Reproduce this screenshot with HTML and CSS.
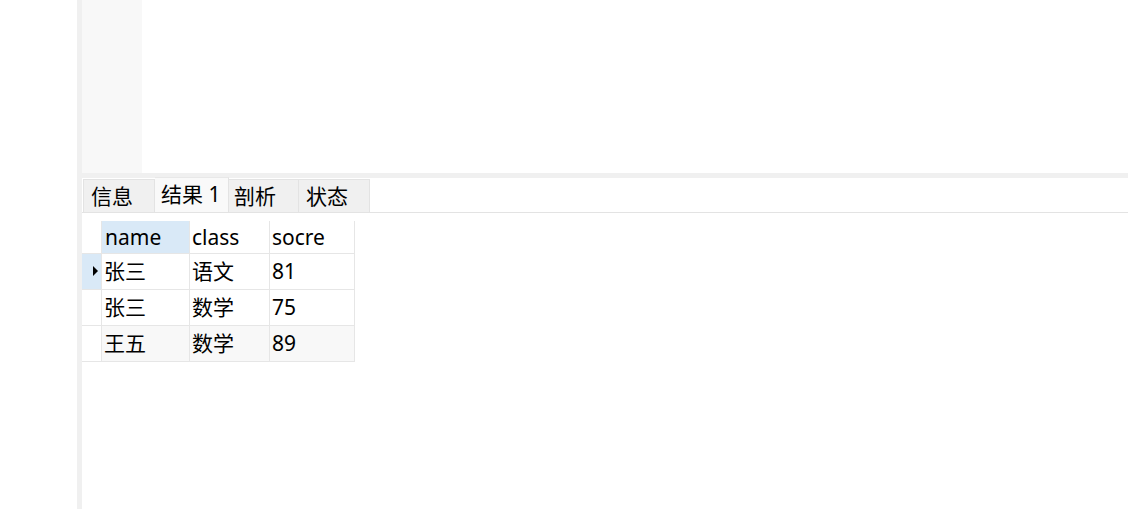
FILE: index.html
```html
<!DOCTYPE html>
<html>
<head>
<meta charset="utf-8">
<link rel="stylesheet" href="styles.css">
</head>
<body>
<div class="app">
  <div class="side"></div>
  <div class="strip"></div>
  <div class="main">
    <div class="editor">
      <div class="gutter"></div>
      <div class="code"></div>
    </div>
    <div class="splitter"></div>
    <div class="tabs">
      <div class="tab t1">信息</div>
      <div class="tab active">结果 1</div>
      <div class="tab t3">剖析</div>
      <div class="tab t4">状态</div>
    </div>
    <div class="results">
      <div class="grid">
        <div class="cell ind head"></div>
        <div class="cell hd sel">name</div>
        <div class="cell hd">class</div>
        <div class="cell hd">socre</div>

        <div class="cell ind cur"><span class="tri"></span></div>
        <div class="cell">张三</div>
        <div class="cell">语文</div>
        <div class="cell">81</div>

        <div class="cell ind"></div>
        <div class="cell">张三</div>
        <div class="cell">数学</div>
        <div class="cell">75</div>

        <div class="cell ind"></div>
        <div class="cell alt">王五</div>
        <div class="cell alt">数学</div>
        <div class="cell alt">89</div>
      </div>
    </div>
  </div>
</div>
</body>
</html>
```

FILE: styles.css
```css
html, body {
  margin: 0;
  padding: 0;
  background: #ffffff;
}
body {
  font-family: "Noto Sans", "Noto Sans CJK SC", sans-serif;
  font-size: 21px;
  color: #000;
}
.app {
  display: flex;
  width: 1128px;
  height: 509px;
  overflow: hidden;
}
.side {
  width: 77px;
  background: #ffffff;
}
.strip {
  width: 5px;
  background: #f0f0f0;
}
.main {
  flex: 1;
  display: flex;
  flex-direction: column;
}
.editor {
  height: 173px;
  display: flex;
}
.gutter {
  width: 60px;
  background: #f8f8f8;
}
.code {
  flex: 1;
  background: #fff;
}
.splitter {
  height: 5px;
  background: #f0f0f0;
}
.tabs {
  height: 35px;
  display: flex;
  align-items: flex-end;
  border-bottom: 1px solid #e3e3e3;
  box-sizing: border-box;
  padding-left: 1px;
}
.tab {
  height: 33px;
  box-sizing: border-box;
  width: 72px;
  background: #f0f0f0;
  border: 1px solid #e3e3e3;
  border-bottom: none;
  border-left: none;
  padding-left: 7px;
  line-height: 33px;
  white-space: nowrap;
}
.tab.t1 {
  border-left: 1px solid #e3e3e3;
}
.tab.t3 {
  width: 70px;
  padding-left: 5px;
}
.tab.t4 {
  width: 71px;
  padding-left: 7px;
}
.tab.active {
  height: 35px;
  width: 74px;
  background: #f9f9f9;
  border-top: 1px solid #e8e8e8;
  line-height: 33px;
  padding-left: 6px;
  padding-bottom: 2px;
}
.results {
  padding-top: 8px;
}
.grid {
  display: grid;
  grid-template-columns: 20px 88px 80px 85px;
  grid-template-rows: 33px 36px 36px 36px;
}
.cell {
  box-sizing: border-box;
  border-right: 1px solid #e6e6e6;
  border-bottom: 1px solid #e6e6e6;
  padding-left: 2px;
  line-height: 34px;
  white-space: nowrap;
  background: #fff;
}
.cell.hd {
  line-height: 33px;
}
.cell.hd.sel {
  background: #d9e9f7;
  padding-left: 3px;
}
.cell.ind {
  padding: 0;
  position: relative;
}
.cell.ind.head {
  border-bottom: 1px solid #e6e6e6;
}
.cell.ind.cur {
  background: #d9e9f7;
}
.tri {
  position: absolute;
  left: 11px;
  top: 12px;
  width: 0;
  height: 0;
  border-top: 5px solid transparent;
  border-bottom: 5px solid transparent;
  border-left: 5px solid #000;
}
.cell.alt {
  background: #f8f8f8;
}
```
